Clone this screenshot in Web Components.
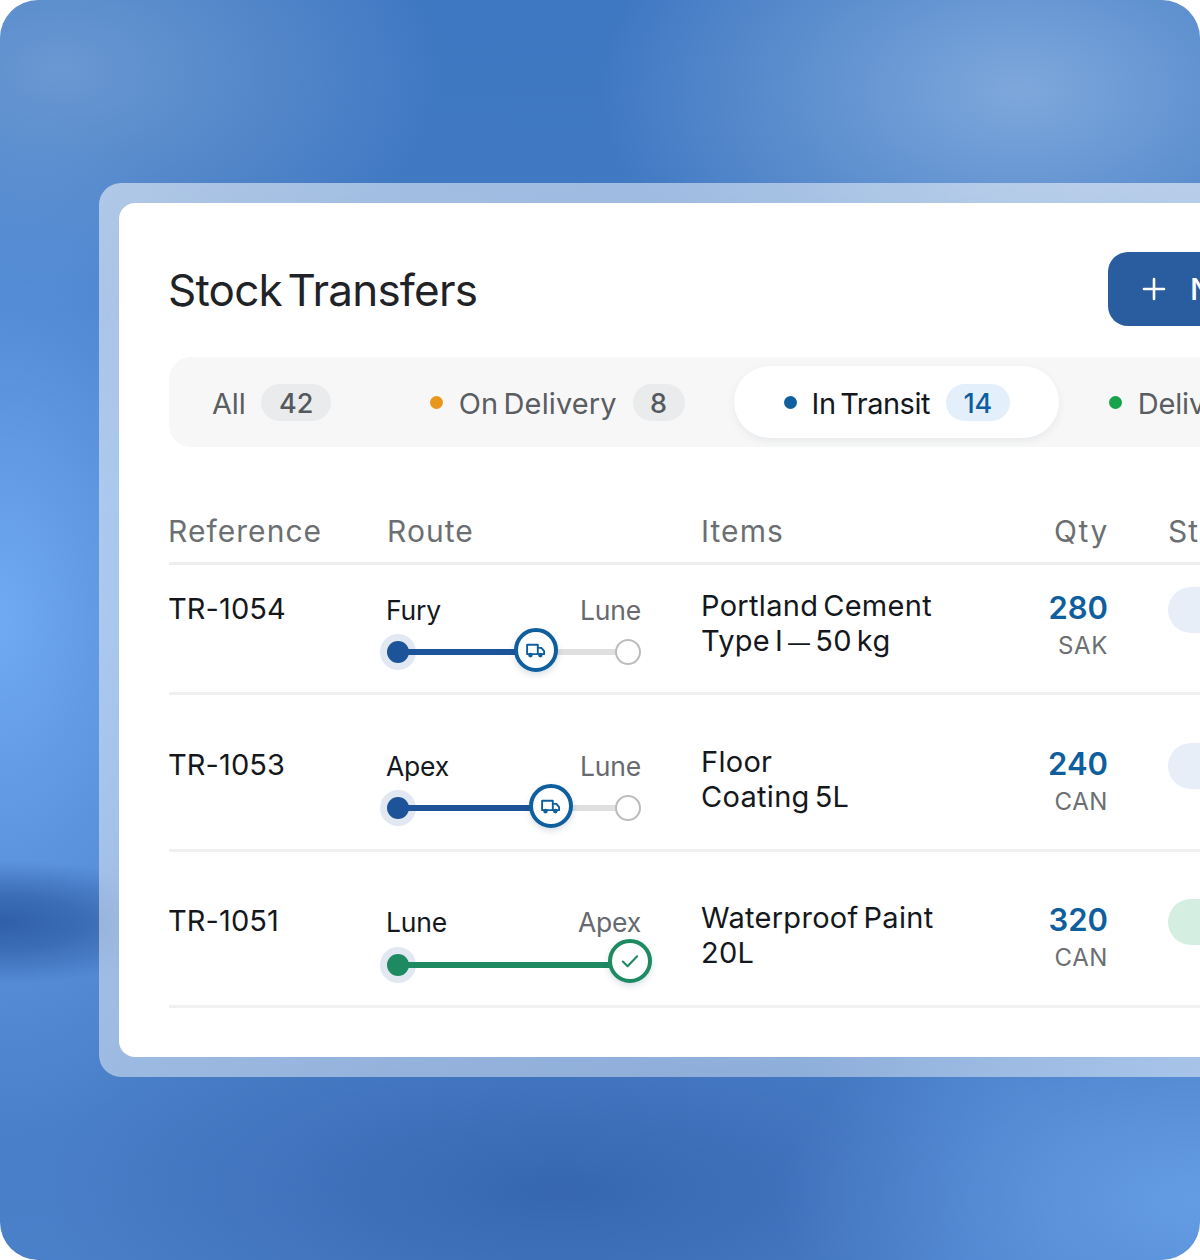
<!doctype html>
<html lang="en">
<head>
<meta charset="utf-8">
<title>Stock Transfers</title>
<style>
  html, body { margin: 0; padding: 0; background: #fff; }
  body { font-family: Inter, "Liberation Sans", sans-serif; }
</style>
</head>
<body>
<stock-stage>
  <stock-card>
    <card-header slot="header">Stock Transfers</card-header>
    <filter-tabs slot="tabs">
      <filter-tab count="42" style="--pad-left:33px">All</filter-tab>
      <filter-tab count="8" dot="#e9971c" style="--label-ls:.1px">On Delivery</filter-tab>
      <filter-tab count="14" dot="#0f5f9e" active style="--label-ls:-.5px;--dot-gap:15px">In Transit</filter-tab>
      <filter-tab count="21" dot="#16a34a">Delivered</filter-tab>
    </filter-tabs>
    <table-head slot="table"></table-head>
    <transfer-row slot="table" first ref="TR-1054" from="Fury" to="Lune" progress="59.9" state="transit"
      item1="Portland Cement" item2="Type I — 50 kg" qty="280" unit="SAK" status="In Transit"></transfer-row>
    <transfer-row slot="table" ref="TR-1053" from="Apex" to="Lune" progress="66.4" state="transit"
      item1="Floor" item2="Coating 5L" qty="240" unit="CAN" status="In Transit"></transfer-row>
    <transfer-row slot="table" last ref="TR-1051" from="Lune" to="Apex" progress="100.9" state="done"
      item1="Waterproof Paint" item2="20L" qty="320" unit="CAN" status="Delivered"></transfer-row>
  </stock-card>
</stock-stage>

<script>
const ICONS = {
  truck: `<svg viewBox="0 0 20 20" width="21" height="21" fill="none" stroke="#0f5f9e" stroke-width="1.8" stroke-linejoin="round" stroke-linecap="round">
    <path d="M2 4.5h10.2v9H2z"/><path d="M12.2 7.5h3.4l2.6 3v3h-6"/>
    <circle cx="5.2" cy="14.4" r="1.3" fill="#0f5f9e"/><circle cx="14.6" cy="14.4" r="1.3" fill="#0f5f9e"/></svg>`,
  check: `<svg viewBox="0 0 20 20" width="22" height="22" fill="none" stroke="#1d8a62" stroke-width="1.9" stroke-linejoin="round" stroke-linecap="round">
    <path d="M3.5 10.5l4.3 4.2 8.7-9"/></svg>`,
  plus: `<svg viewBox="0 0 24 24" width="24" height="24" fill="none" stroke="#fff" stroke-width="2.6" stroke-linecap="round">
    <path d="M12 2v20M2 12h20"/></svg>`,
};

function define(tag, render) {
  customElements.define(tag, class extends HTMLElement {
    connectedCallback() {
      if (this.shadowRoot) return;
      this.attachShadow({ mode: 'open' }).innerHTML = render(this);
    }
  });
}

define('stock-stage', () => `
  <style>
    :host { display: block; width: 1200px; height: 1260px; }
    .stage {
      box-sizing: border-box; width: 100%; height: 100%; overflow: hidden;
      border-radius: 38px; padding: 183px 0 0 99px;
      background:
        radial-gradient(ellipse 190px 62px at 0px 922px, #2f5fa8 0%, rgba(47,95,168,.7) 45%, rgba(47,95,168,0) 100%),
        radial-gradient(ellipse 300px 520px at 0px 620px, #70aaf2 0%, rgba(112,170,242,0) 100%),
        radial-gradient(ellipse 420px 260px at 1020px 90px, #7ea8dc 0%, rgba(126,168,220,0) 100%),
        radial-gradient(ellipse 380px 240px at 60px 70px, #6a98d2 0%, rgba(106,152,210,0) 100%),
        radial-gradient(ellipse 420px 220px at 1200px 1200px, #659de4 0%, rgba(101,157,228,0) 100%),
        radial-gradient(ellipse 520px 190px at 560px 1190px, #3666b0 0%, rgba(54,102,176,0) 100%),
        linear-gradient(180deg, #3f78c2 0%, #4a80c8 100%);
    }
  </style>
  <div class="stage"><slot></slot></div>`);

define('stock-card', () => `
  <style>
    :host { display: block; width: 1400px; }
    .frame {
      padding: 20px; border-radius: 22px 0 0 22px;
      background:
        linear-gradient(180deg, rgba(255,255,255,.14), rgba(255,255,255,0) 60%),
        linear-gradient(90deg, rgba(255,255,255,.46), rgba(255,255,255,.4) 50%, rgba(255,255,255,.56));
      backdrop-filter: blur(28px);
    }
    .card { box-sizing: border-box; height: 854px; padding: 49px 0 0 50px; border-radius: 16px 0 0 16px; background: #fff; }
  </style>
  <div class="frame"><div class="card">
    <slot name="header"></slot>
    <slot name="tabs"></slot>
    <slot name="table"></slot>
  </div></div>`);

define('card-header', () => `
  <style>
    :host { display: flex; align-items: center; justify-content: space-between; width: 1231px; height: 74px; }
    h1 { margin: 2px 0 0 -1px; font-size: 44px; font-weight: 400; letter-spacing: -.8px; word-spacing: -6px; color: #1f2328; }
    button {
      display: flex; align-items: center; gap: 24px; width: 292px; height: 74px; padding: 0 0 0 34px; flex: none;
      border: 0; border-radius: 20px; background: #2a5ca0; color: #fff;
      font: 500 30px Inter, "Liberation Sans", sans-serif; white-space: nowrap;
    }
    svg { flex: none; }
  </style>
  <h1><slot></slot></h1>
  <button>${ICONS.plus}<span>New Transfer</span></button>`);

define('filter-tabs', () => `
  <style>
    :host {
      display: flex; box-sizing: border-box; width: 1240px; height: 90px; margin-top: 31px; padding: 9px 10px;
      border-radius: 22px; background: #f7f7f7;
    }
  </style>
  <slot></slot>`);

define('filter-tab', (el) => {
  const active = el.hasAttribute('active');
  const dot = el.getAttribute('dot');
  return `
  <style>
    :host { display: flex; align-items: center; height: 72px; padding: 0 49px 0 var(--pad-left, 50px); box-sizing: border-box; white-space: nowrap; }
    :host([active]) { background: #fff; border-radius: 36px; box-shadow: 0 3px 8px rgba(30,50,80,.07); }
    .dot { width: 13px; height: 13px; border-radius: 50%; margin-right: var(--dot-gap, 16px); background: ${dot}; }
    .label { font-size: 29px; letter-spacing: var(--label-ls, -.2px); word-spacing: -3px; padding-top: 2px; color: ${active ? '#14181d' : '#5a5d61'}; }
    .count {
      display: flex; align-items: center; justify-content: center; height: 37px; padding: 2px 17.5px 0; box-sizing: border-box; margin-left: 16px;
      border-radius: 19px; font-size: 27px; font-weight: 500;
      background: ${active ? '#e3f0fb' : '#e9ebec'}; color: ${active ? '#0f5f9e' : '#55585c'};
    }
  </style>
  ${dot ? '<span class="dot"></span>' : ''}
  <span class="label"><slot></slot></span>
  <span class="count">${el.getAttribute('count')}</span>`;
});

const COLUMNS = `display: grid; grid-template-columns: 218px 315px 295px 111px 1fr;`;

define('table-head', () => `
  <style>
    :host { ${COLUMNS} align-items: center; box-sizing: border-box; height: 118px; padding-top: 53px; width: 1240px;
      border-bottom: 3px solid #eeeeee; font-size: 30px; color: #6c6f72; letter-spacing: 1.05px; }
    .first { margin-left: -1px; }
    .items { margin-left: -1px; }
    .qty { text-align: right; margin-right: -1px; letter-spacing: 1.6px; }
    .status { margin-left: 60px; }
  </style>
  <span class="first">Reference</span><span>Route</span><span class="items">Items</span><span class="qty">Qty</span><span class="status">Status</span>`);

define('transfer-row', (el) => {
  const a = (n) => el.getAttribute(n);
  const done = a('state') === 'done';
  const first = el.hasAttribute('first');
  const last = el.hasAttribute('last');
  return `
  <style>
    :host { ${COLUMNS} box-sizing: border-box; width: 1240px; height: ${first ? '130px' : last ? '156px' : '157px'};
      padding-top: ${first ? '24px' : last ? '49px' : '50px'}; border-bottom: 3px solid #f0f0f0; }
    .ref { margin-left: -1px; font-size: 29px; line-height: 40px; letter-spacing: .1px; color: #14181d; }
    .items { margin-left: -1px; font-size: 29px; line-height: 35px; letter-spacing: .3px; word-spacing: -3.5px; color: #14181d; margin-top: -1px; }
    .dash { font-size: 22px; }
    .qty { text-align: right; }
    .num { font-size: 31px; font-weight: 600; line-height: 40px; color: #0f5f9e; margin-top: -1px; }
    .unit { font-size: 24px; line-height: 30px; letter-spacing: .6px; color: #6c6f72; margin-top: 3px; }
    status-pill { margin-left: 60px; margin-top: -2px; }
  </style>
  <div class="ref">${a('ref')}</div>
  <route-progress from="${a('from')}" to="${a('to')}" progress="${a('progress')}" state="${a('state')}"></route-progress>
  <div class="items">${a('item1')}<br>${a('item2').replace('—', '<span class="dash">—</span>')}</div>
  <div class="qty"><div class="num">${a('qty')}</div><div class="unit">${a('unit')}</div></div>
  <status-pill ${done ? 'done' : ''}>${a('status')}</status-pill>`;
});

define('route-progress', (el) => {
  const done = el.getAttribute('state') === 'done';
  const color = done ? '#1d8a62' : '#1d5398';
  const ring = done ? '#1d8a62' : '#0f5f9e';
  const pos = Number(el.getAttribute('progress'));
  return `
  <style>
    :host { display: block; width: 254px; }
    .names { display: flex; justify-content: space-between; margin: 1px 0 0 -1px; font-size: 26.5px; line-height: 40px; letter-spacing: -.2px; }
    .from { color: #14181d; }
    .to { color: #66696d; }
    .track { position: relative; height: 6px; margin: ${done ? '20px' : '19px'} 13px 0 11px; background: #dfdfdf; }
    .start {
      position: absolute; left: -11px; top: -8px; width: 22px; height: 22px; border-radius: 50%;
      background: ${color}; box-shadow: 0 0 0 7px #e2e8f2;
    }
    .fill { position: absolute; left: 0; top: 0; bottom: 0; width: ${pos}%; background: ${color}; }
    .end {
      position: absolute; right: -13px; top: -10px; box-sizing: border-box; width: 26px; height: 26px;
      border-radius: 50%; border: 2.5px solid #bcbcbc; background: #fff;
    }
    .marker {
      position: absolute; left: ${pos}%; top: ${done ? '-1px' : '1px'}; transform: translate(-50%, -50%);
      display: flex; align-items: center; justify-content: center; box-sizing: border-box;
      width: 44px; height: 44px; border-radius: 50%; border: 4px solid ${ring}; background: #fff;
      box-shadow: 0 3px 6px rgba(30,60,100,.16);
    }
    svg { display: block; }
  </style>
  <div class="names"><span class="from">${el.getAttribute('from')}</span><span class="to">${el.getAttribute('to')}</span></div>
  <div class="track">
    <div class="start"></div>
    <div class="fill"></div>
    ${done ? '' : '<div class="end"></div>'}
    <div class="marker">${done ? ICONS.check : ICONS.truck}</div>
  </div>`;
});

define('status-pill', (el) => `
  <style>
    :host {
      display: inline-flex; align-items: center; align-self: start; box-sizing: border-box; height: 46px; padding: 0 22px 0 60px;
      border-radius: 23px; white-space: nowrap; width: max-content; font-size: 27px;
      background: ${el.hasAttribute('done') ? '#d4efe2' : '#e8eef7'}; color: ${el.hasAttribute('done') ? '#1d8a62' : '#1d5398'};
    }
  </style>
  <slot></slot>`);
</script>
</body>
</html>
